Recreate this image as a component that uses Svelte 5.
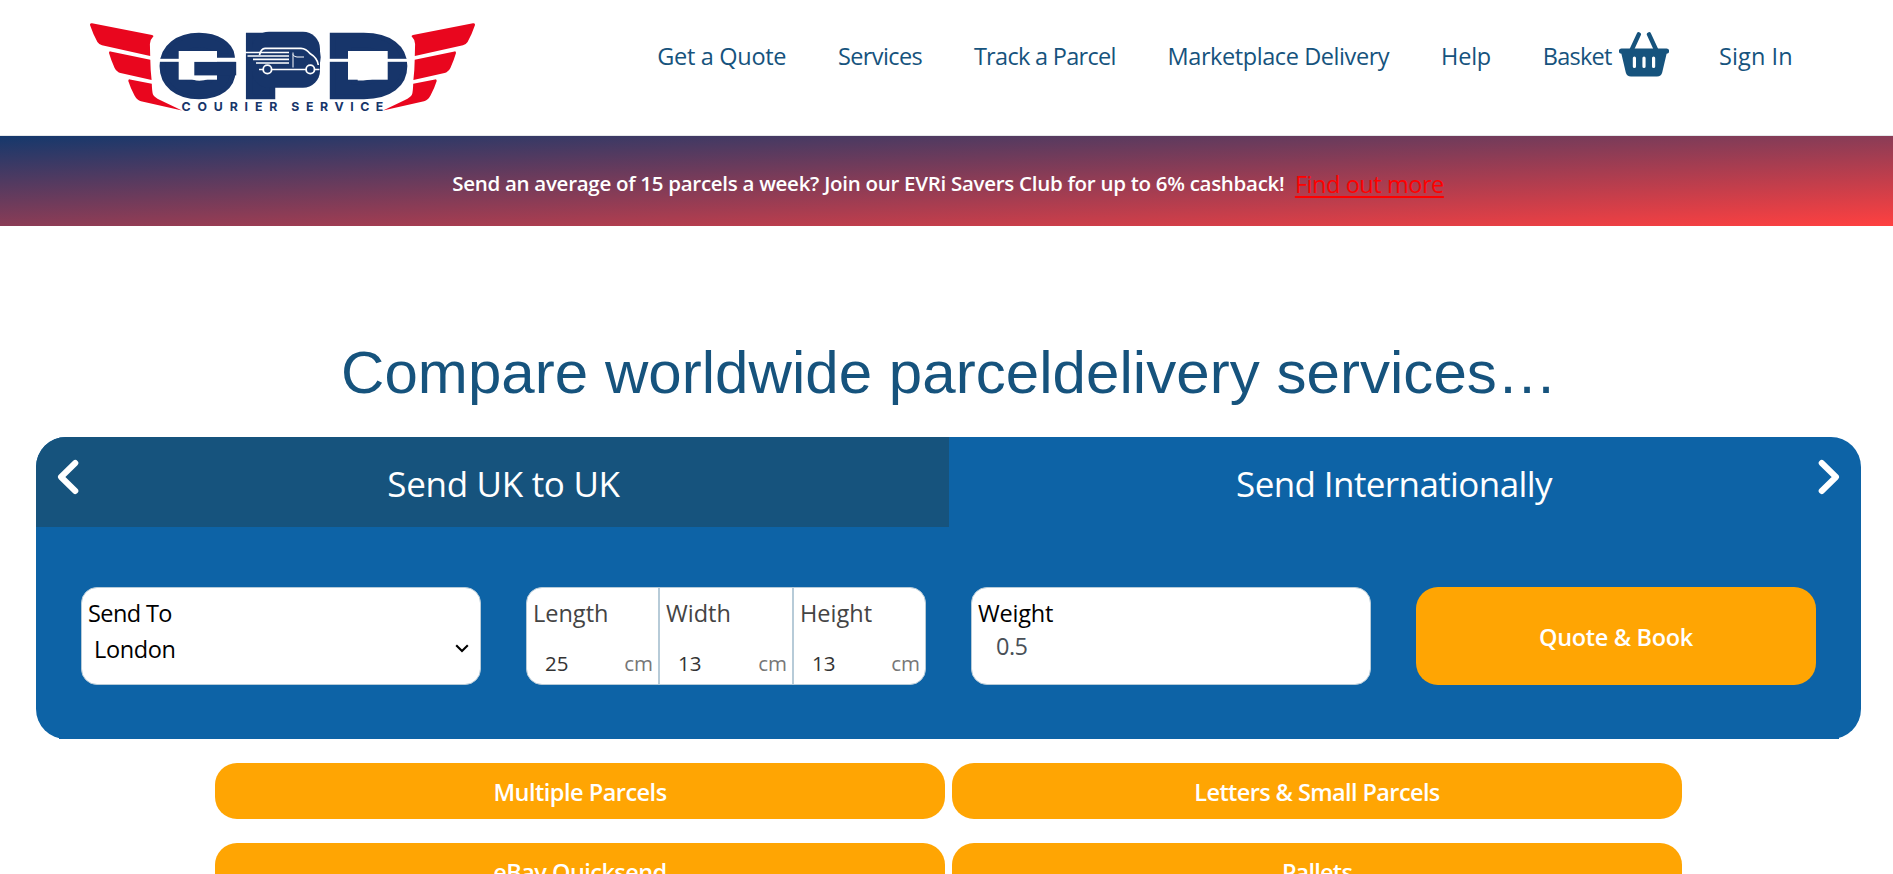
<script>
  const nav = [
    { label: 'Get a Quote', track: -0.31 },
    { label: 'Services', track: -0.62 },
    { label: 'Track a Parcel', track: -0.7 },
    { label: 'Marketplace Delivery', track: -0.42 },
    { label: 'Help', track: -0.2 },
    { label: 'Basket', track: -0.76, basket: true },
    { label: 'Sign In', track: 0.08 }
  ];
  const dims = [
    { label: 'Length', value: '25' },
    { label: 'Width', value: '13' },
    { label: 'Height', value: '13' }
  ];
  const services = [
    { label: 'Multiple Parcels', track: -0.5 },
    { label: 'Letters & Small Parcels', track: -0.6 },
    { label: 'eBay Quicksend', track: -0.55 },
    { label: 'Pallets', track: -0.75 }
  ];
</script>

{#snippet wing()}
  <path d="M92 23.3 L152 35 Q154.5 35.6 152.5 37.5 Q149.8 40 149.9 44 L150.2 56 L102 45.2 Q99 44.5 97.4 42 Q93 34 90 25 Q89.6 23 92 23.3Z" />
  <path d="M110.5 51.4 L150.3 59.7 Q150.4 70 151.6 80.1 L120.5 73 Q117 72.2 114.6 68 Q111 60 109 53 Q109 51 110.5 51.4Z" />
  <path d="M130 79.4 L151.8 83.7 Q152 91.5 153 94.5 Q154.5 97.3 160 100 L182 110.4 L141 101.2 Q137 100.3 134.5 95.5 Q130.5 88 128.3 81 Q128.2 79 130 79.4Z" />
{/snippet}

<header>
  <svg class="logo" viewBox="88 20 389 96" width="389" height="96" aria-label="GPD Courier Service">
    <g fill="#e9061e">
      {@render wing()}
      <g transform="translate(565 0) scale(-1 1)">{@render wing()}</g>
    </g>
    <g class="mark">
      <text transform="translate(158.8 95.9) scale(1.23 .985)">G</text>
      <text transform="translate(243.6 96.8) scale(1.4 1.02)">P</text>
      <text transform="translate(327.4 96.8) scale(1.33 1.02)">D</text>
    </g>
    <rect x="252" y="31.7" width="68" height="56" rx="17" fill="#17356a" />
    <g fill="#fff">
      <rect x="178.7" y="51" width="38.3" height="28.7" />
      <rect x="348" y="51" width="39.7" height="28.7" />
    </g>
    <rect x="194.3" y="61.5" width="41.9" height="13.9" fill="#17356a" />
    <g fill="#fff">
      <rect x="158" y="58.8" width="79" height="3" />
      <rect x="328" y="58.8" width="80" height="3" />
    </g>
    <g stroke="#fff" fill="none">
      <path stroke-width="1.7" d="M259.5 55 Q261 48.6 265 48.4 H301 Q306 48.6 310 53.5 Q317.5 58 318.3 65" />
      <path stroke-width="1.7" d="M245 52.5 H289 M247.5 56 H289 M253 59.4 H289 M256 63 H289" />
      <path stroke-width="1.5" d="M259 69.4 H263 M272 69.4 H306 M315 69.4 H319.5" />
      <path stroke-width="1" d="M293 52.5 V67.5 M293 54.5 Q294 57 297 57 H304" />
      <circle cx="267.4" cy="69.4" r="4.2" stroke-width="1.8" />
      <circle cx="310.3" cy="69.4" r="4.2" stroke-width="1.8" />
    </g>
    <g class="strap">
      <text x="181.4" y="111.2" textLength="96" lengthAdjust="spacing">COURIER</text>
      <text x="291.3" y="111.2" textLength="92" lengthAdjust="spacing">SERVICE</text>
    </g>
  </svg>

  <nav>
    {#each nav as item}
      <a href="#top">
        <span style:letter-spacing="{item.track}px">{item.label}</span>
        {#if item.basket}
          <svg class="basket" viewBox="0 0 50 45" width="50" height="45" aria-hidden="true">
            <path d="M19.8 2.4 L12.6 18 M30 2.4 L37.2 18" fill="none" stroke="#16537d" stroke-width="4.4" stroke-linecap="round" />
            <path fill="#16537d" fill-rule="evenodd" d="M2.5 16.6 H47.5 A2.6 2.6 0 0 1 47.6 21.8 L43.2 40.6 Q42.2 44.6 38 44.6 H12 Q7.8 44.6 6.8 40.6 L2.4 21.8 A2.6 2.6 0 0 1 2.5 16.6Z M15.4 24.4 a1.6 1.6 0 0 0 -1.6 1.6 v8.4 a1.6 1.6 0 0 0 3.2 0 v-8.4 a1.6 1.6 0 0 0 -1.6 -1.6Z M25 24.4 a1.6 1.6 0 0 0 -1.6 1.6 v8.4 a1.6 1.6 0 0 0 3.2 0 v-8.4 a1.6 1.6 0 0 0 -1.6 -1.6Z M34.6 24.4 a1.6 1.6 0 0 0 -1.6 1.6 v8.4 a1.6 1.6 0 0 0 3.2 0 v-8.4 a1.6 1.6 0 0 0 -1.6 -1.6Z" />
          </svg>
        {/if}
      </a>
    {/each}
  </nav>
</header>

<div class="promo">
  <strong>Send an average of 15 parcels a week? Join our EVRi Savers Club for up to 6% cashback!</strong>
  <a href="#club">Find out more</a>
</div>

<main>
  <h1>Compare worldwide parceldelivery services…</h1>

  <section class="quote">
    <div class="tabs">
      <button class="tab active">
        <svg class="chev left" viewBox="0 0 22 36" width="22" height="36" aria-hidden="true"><path d="M18.3 4 L4 18 L18.3 32" /></svg>
        <span class="uk">Send UK to UK</span>
      </button>
      <button class="tab">
        <span class="intl">Send Internationally</span>
        <svg class="chev right" viewBox="0 0 22 36" width="22" height="36" aria-hidden="true"><path d="M3.7 4 L18 18 L3.7 32" /></svg>
      </button>
    </div>

    <div class="fields">
      <div class="field">
        <label class="l-send" for="dest">Send To</label>
        <div class="select" id="dest">
          <span>London</span>
          <svg viewBox="0 0 14 9" width="14" height="9" aria-hidden="true"><path d="M1.2 1.2 L7 7 L12.8 1.2" fill="none" stroke="#000" stroke-width="2.1" /></svg>
        </div>
      </div>

      <div class="field dims">
        {#each dims as d}
          <div class="dim">
            <span>{d.label}</span>
            <div class="measure"><b>{d.value}</b><i>cm</i></div>
          </div>
        {/each}
      </div>

      <div class="field">
        <span class="l-weight">Weight</span>
        <div class="weight">0.5</div>
      </div>

      <button class="cta">Quote &amp; Book</button>
    </div>
  </section>

  <div class="services">
    {#each services as s}
      <button style:letter-spacing="{s.track}px">{s.label}</button>
    {/each}
  </div>
</main>

<style>
  :global(body) {
    background: #fff;
    overflow: hidden;
    font-family: "Open Sans", "Noto Sans", sans-serif;
    font-size: 23.5px;
  }
  :global(#app) { height: 874px; overflow: hidden; }

  button {
    margin: 0;
    border: 0;
    font-family: inherit;
    color: #fff;
  }

  header {
    box-sizing: border-box;
    height: 136px;
    display: flex;
    align-items: flex-start;
    padding: 20px 0 0 88px;
    border-bottom: 1px solid #e6e8ea;
  }
  .logo { display: block; flex: none; overflow: visible; }
  .mark {
    font: 900 84px Inter, sans-serif;
    fill: #17356a;
    stroke: #17356a;
    stroke-width: 4.4;
  }
  .strap { font: 700 12.3px Inter, sans-serif; fill: #17356a; }

  nav {
    display: flex;
    gap: 51.8px;
    margin-left: 180.3px;
    padding-top: 20px;
  }
  nav a {
    display: flex;
    line-height: 32px;
    color: #16537d;
    text-decoration: none;
    white-space: nowrap;
  }
  .basket { margin: -8px -1.8px -6px 7.4px; }

  .promo {
    box-sizing: border-box;
    height: 90px;
    display: flex;
    align-items: center;
    padding: 4px 0 0 452.2px;
    background: linear-gradient(to bottom right, #15386c, #ff4040);
    white-space: nowrap;
  }
  .promo strong {
    font-size: 20.5px;
    font-weight: 600;
    letter-spacing: -0.285px;
    color: #fff;
  }
  .promo a {
    margin: 2px 0 0 10.5px;
    color: #f00;
    letter-spacing: -0.44px;
    text-decoration-thickness: 2px;
    text-underline-offset: 3px;
    text-decoration-skip-ink: none;
  }

  h1 {
    margin: 117px 0 34px;
    padding-left: 5px;
    font: 400 60px/60px "Liberation Sans", Arial, sans-serif;
    letter-spacing: 0.05px;
    text-align: center;
    color: #16537d;
  }

  .quote {
    position: relative;
    width: 1825px;
    height: 302px;
    margin-left: 36px;
    border-radius: 30px;
    background: #0d63a6;
  }
  .quote::after {
    content: "";
    position: absolute;
    left: 23px;
    right: 22px;
    bottom: 0;
    height: 2px;
    background: #0d63a6;
  }
  .tabs {
    display: grid;
    grid-template-columns: 913px 912px;
    height: 90px;
  }
  .tab {
    display: flex;
    align-items: center;
    justify-content: center;
    padding: 3px 21px 0;
    background: none;
    font-size: 35px;
  }
  .tab.active { background: #16537d; border-top-left-radius: 30px; }
  .tab span { flex: 1; text-align: center; white-space: nowrap; }
  .uk { letter-spacing: -0.3px; }
  .intl { letter-spacing: -0.6px; }
  .chev { margin-top: -14px; }
  .chev path {
    fill: none;
    stroke: #fff;
    stroke-width: 6;
    stroke-linecap: round;
    stroke-linejoin: round;
  }

  .fields {
    display: grid;
    grid-template-columns: repeat(4, 400px);
    gap: 45px;
    padding: 60px 45px 0;
  }
  .field {
    box-sizing: border-box;
    height: 98px;
    padding: 10px 6px 0;
    border: 1px solid #b7cbd8;
    border-radius: 16px;
    background: #fff;
    color: #000;
    line-height: 30px;
  }
  .l-send { display: block; letter-spacing: -0.6px; }
  .select {
    display: flex;
    align-items: center;
    justify-content: space-between;
    margin-top: 6px;
    padding: 0 5px 0 6px;
    letter-spacing: -0.35px;
  }
  .select svg { margin-bottom: 1px; }
  .field.dims {
    display: grid;
    grid-template-columns: 133px 134px 131px;
    padding: 0;
    color: #444;
  }
  .dim { padding: 10px 5px 0 6px; }
  .dim:not(:last-child) { border-right: 2px solid #b7cbd8; }
  .measure {
    display: flex;
    justify-content: space-between;
    margin-top: 23px;
    padding-left: 12px;
    font-size: 20.5px;
    line-height: 24px;
  }
  .measure b { font-weight: 400; color: #333; }
  .measure i { font-style: normal; color: #777; }
  .l-weight { letter-spacing: -0.2px; display: block; }
  .weight { margin-top: 3px; padding-left: 18px; letter-spacing: -0.5px; color: #495057; }

  .cta,
  .services button {
    padding: 2px 0 0;
    border-radius: 22px;
    background: #ffa503;
    font-size: 23.5px;
    font-weight: 600;
  }
  .cta { letter-spacing: -0.33px; }

  .services {
    display: grid;
    grid-template-columns: 730px 730px;
    grid-auto-rows: 56px;
    gap: 24px 7px;
    margin: 24px 0 0 215px;
  }
</style>
